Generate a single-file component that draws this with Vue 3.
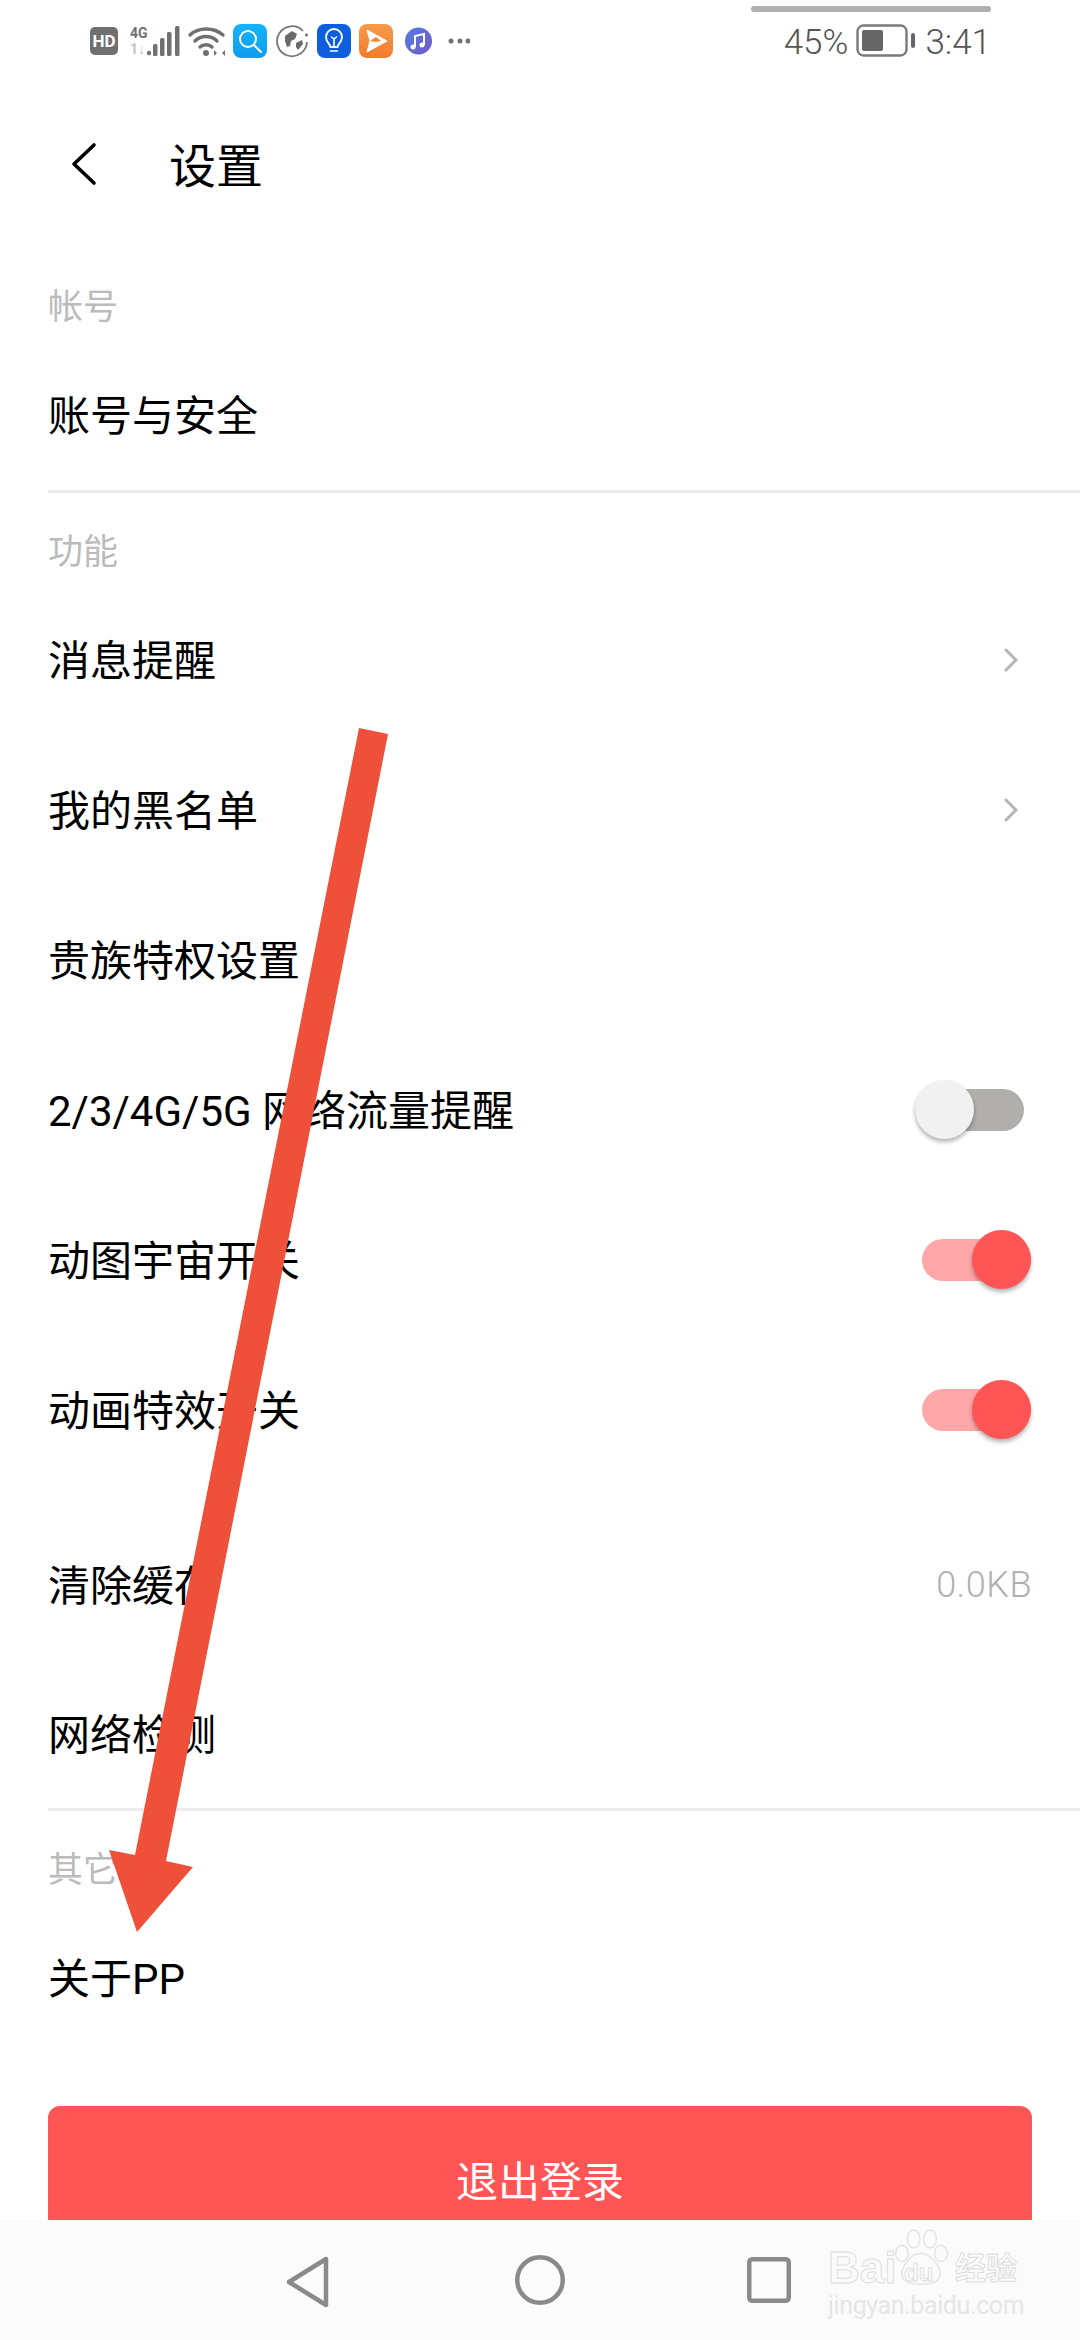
<template>
  <div class="phone">
    <!-- 状态栏 -->
    <div class="status-bar">
      <div class="top-line"></div>
      <svg class="ic" width="28" height="28" viewBox="0 0 28 28">
        <rect width="28" height="28" rx="5" fill="#707070" />
        <text x="14" y="20" text-anchor="middle" class="hd">HD</text>
      </svg>
      <svg class="ic" width="55" height="34" viewBox="0 0 55 34">
        <text x="5" y="14" class="net">4G</text>
        <text x="5" y="30" class="net light">1↓</text>
        <circle cx="24" cy="29" r="2.2" fill="#707070" />
        <rect x="28" y="20" width="4.5" height="12" rx="1.5" fill="#707070" />
        <rect x="35" y="14" width="4.5" height="18" rx="1.5" fill="#707070" />
        <rect x="42" y="8" width="4.5" height="24" rx="1.5" fill="#707070" />
        <rect x="50" y="2" width="4.5" height="30" rx="1.5" fill="#707070" />
      </svg>
      <svg class="ic" width="39" height="34" viewBox="0 0 39 34">
        <g fill="none" stroke="#707070" stroke-width="3.4" stroke-linecap="round">
          <path d="M3 11C11 3 27 3 36 11" />
          <path d="M8 17C14 11 24 11 30 17" />
          <path d="M13 23C16 20 22 20 25 23" />
        </g>
        <circle cx="19" cy="29" r="3" fill="#707070" />
        <path d="M27 26l3 3-3 3zM38 26l-3 3 3 3z" fill="#707070" />
      </svg>
      <svg class="ic" width="34" height="34" viewBox="0 0 34 34">
        <defs>
          <linearGradient id="searchBg" x1="0" y1="0" x2="0" y2="1">
            <stop offset="0" stop-color="#12b5fb" />
            <stop offset="1" stop-color="#0f9df0" />
          </linearGradient>
          <linearGradient id="playBg" x1="0" y1="0" x2="0" y2="1">
            <stop offset="0" stop-color="#f89a4a" />
            <stop offset="1" stop-color="#f27c2e" />
          </linearGradient>
          <linearGradient id="musicBg" x1="0" y1="0" x2="1" y2="1">
            <stop offset="0" stop-color="#4f7fe0" />
            <stop offset="1" stop-color="#7a55c8" />
          </linearGradient>
        </defs>
        <rect width="34" height="34" rx="8" fill="url(#searchBg)" />
        <circle cx="15" cy="15" r="8" fill="none" stroke="#fff" stroke-width="2" />
        <path d="M21 21l7 7" stroke="#fff" stroke-width="2" stroke-linecap="round" />
      </svg>
      <svg class="ic" width="35" height="34" viewBox="0 0 35 34">
        <path d="M29 7A15 15 0 1 0 33 18" fill="none" stroke="#777" stroke-width="1.800" />
        <path d="M11 12l7-5 5 3-2 5-4 2-1 5-3 1-2-6zM22 19l6-3 1 4-5 6-2-3z" fill="#6a6a6a" />
        <circle cx="32.500" cy="11" r="1.400" fill="#6a6a6a" />
      </svg>
      <svg class="ic" width="35" height="34" viewBox="0 0 35 34">
        <rect x="1" width="34" height="34" rx="8" fill="#0d5fe0" />
        <path d="M14.500 23c0-3-4.500-4.500-4.500-10a8 8 0 0 1 16 0c0 5.500-4.500 7-4.500 10z" fill="none" stroke="#fff" stroke-width="1.800" />
        <path d="M18 23v-8M15.500 13l2.500 2 2.500-2M14.500 27h7" fill="none" stroke="#fff" stroke-width="1.600" stroke-linecap="round" />
      </svg>
      <svg class="ic" width="35" height="34" viewBox="0 0 35 34">
        <rect x="1" width="34" height="34" rx="8" fill="url(#playBg)" />
        <path d="M9 6l20 11-20 11 3-11z" fill="#fff" stroke="#fff" stroke-width="1" stroke-linejoin="round" />
        <path d="M12 17l6-4 5 4-5 1z" fill="#f58537" />
      </svg>
      <svg class="ic" width="32" height="34" viewBox="0 0 32 34">
        <circle cx="18.500" cy="17" r="13.500" fill="url(#musicBg)" />
        <path d="M15 23V12l9-2v11" fill="none" stroke="#fff" stroke-width="2" />
        <circle cx="13" cy="23" r="2.500" fill="#fff" />
        <circle cx="22" cy="21" r="2.500" fill="#fff" />
      </svg>
      <svg class="ic" width="31" height="34" viewBox="0 0 31 34">
        <circle cx="12" cy="17" r="2.500" fill="#707070" />
        <circle cx="21" cy="17" r="2.500" fill="#707070" />
        <circle cx="29" cy="17" r="2.500" fill="#707070" />
      </svg>

      <div class="status-right">
        <span>45%</span>
        <svg width="60" height="34" viewBox="0 0 60 34">
          <rect x="1.500" y="1.500" width="49" height="30" rx="6" fill="none" stroke="#7a7a7a" stroke-width="2.400" />
          <rect x="6" y="6" width="21" height="21" rx="2" fill="#666" />
          <rect x="55" y="9" width="4" height="15" rx="2" fill="#666" />
        </svg>
        <span>3:41</span>
      </div>
    </div>

    <!-- 内容 -->
    <div class="content">
      <div class="header">
        <svg class="back" width="26" height="44" viewBox="0 0 26 44">
          <path d="M23 3L3 22l20 19" fill="none" stroke="#000" stroke-width="3.600" stroke-linecap="round" stroke-linejoin="round" />
        </svg>
        <div class="title">设置</div>
      </div>

      <div v-for="sec in sections" :key="sec.title" class="section">
        <div class="section-title">{{ sec.title }}</div>
        <div v-for="row in sec.rows" :key="row.label" class="row" :class="{ gap: row.gap, short: row.short }">
          <span class="label">{{ row.label }}</span>
          <svg v-if="row.type === 'arrow'" class="chev" width="18" height="26" viewBox="0 0 18 26">
            <path d="M4 3l10 10L4 23" fill="none" stroke="#b5b5b5" stroke-width="3" stroke-linecap="round" />
          </svg>
          <div v-else-if="row.type === 'switch'" class="switch" :class="{ on: row.on }">
            <div class="knob"></div>
          </div>
          <span v-else-if="row.value" class="value">{{ row.value }}</span>
        </div>
      </div>

      <button class="logout">退出登录</button>
    </div>

    <!-- 底部导航 -->
    <div class="nav">
      <svg width="48" height="54" viewBox="0 0 48 54">
        <path d="M41 4v46L4 27z" fill="none" stroke="#8a8a8a" stroke-width="4.500" stroke-linejoin="round" />
      </svg>
      <svg width="54" height="54" viewBox="0 0 54 54">
        <circle cx="27" cy="25" r="22.750" fill="none" stroke="#8a8a8a" stroke-width="4.500" />
      </svg>
      <svg width="48" height="50" viewBox="0 0 48 50">
        <rect x="2.250" y="4.250" width="39.500" height="41.500" rx="3" fill="none" stroke="#8a8a8a" stroke-width="4.500" />
      </svg>
    </div>

    <!-- 水印 -->
    <div class="watermark">
      <svg class="paw" width="58" height="64" viewBox="0 0 64 64">
        <g fill="#fbfbfb" stroke="#e2e2e2" stroke-width="1.500">
          <ellipse cx="11" cy="28" rx="7" ry="9" />
          <ellipse cx="24" cy="12" rx="7" ry="10" />
          <ellipse cx="42" cy="12" rx="7" ry="10" />
          <ellipse cx="54" cy="28" rx="7" ry="9" />
          <path d="M32 28c-10 0-21 13-21 23 0 9 9 11 21 11s21-2 21-11c0-10-11-23-21-23z" />
        </g>
      </svg>
      <span class="wm-bai">Bai</span>
      <span class="wm-du">du</span>
      <span class="wm-cn">经验</span>
      <div class="wm-url">jingyan.baidu.com</div>
    </div>

    <!-- 标注箭头 -->
    <svg class="mark" width="1080" height="2340" viewBox="0 0 1080 2340">
      <path d="M359 728L388 734L166 1861L193 1867L137 1932L109 1850L135 1855Z" fill="#ef503a" />
    </svg>
  </div>
</template>

<script setup>
const sections = [
  {
    title: '帐号',
    rows: [{ label: '账号与安全' }]
  },
  {
    title: '功能',
    rows: [
      { label: '消息提醒', type: 'arrow' },
      { label: '我的黑名单', type: 'arrow' },
      { label: '贵族特权设置' },
      { label: '2/3/4G/5G 网络流量提醒', type: 'switch', on: false },
      { label: '动图宇宙开关', type: 'switch', on: true },
      { label: '动画特效开关', type: 'switch', on: true },
      { label: '清除缓存', value: '0.0KB', gap: true },
      { label: '网络检测', short: true }
    ]
  },
  {
    title: '其它',
    rows: [{ label: '关于PP' }]
  }
]
</script>

<style>
html,
body {
  margin: 0;
  background: #fff;
}
</style>

<style scoped>
.phone {
  position: relative;
  width: 1080px;
  height: 2340px;
  overflow: hidden;
  display: flex;
  flex-direction: column;
  background: #fff;
  font-family: Roboto, "Noto Sans CJK SC", sans-serif;
  color: #000;
}

.status-bar {
  position: relative;
  flex: none;
  height: 70px;
  box-sizing: border-box;
  padding: 12px 89px 0 90px;
  display: flex;
  align-items: center;
  gap: 7px;
}

.top-line {
  position: absolute;
  left: 751px;
  top: 6px;
  width: 240px;
  height: 6px;
  border-radius: 3px;
  background: #b0b0b0;
}

.ic {
  flex: none;
}

.hd {
  font: 700 17px Roboto, sans-serif;
  fill: #fff;
}

.net {
  font: 700 14px Roboto, sans-serif;
  fill: #707070;
}

.net.light {
  fill: #c4c4c4;
}

.status-right {
  margin-left: auto;
  display: flex;
  align-items: center;
  gap: 8px;
  font-size: 35px;
  font-weight: 300;
  color: #555;
}

.status-right span {
  margin-top: 2px;
}

.status-right svg {
  margin-right: 1px;
}

.content {
  flex: 1;
  min-height: 0;
  overflow: hidden;
}

.header {
  display: flex;
  align-items: center;
  height: 96px;
  padding: 48px 0 56px 71px;
  box-sizing: content-box;
}

.back {
  margin-top: -4px;
}

.title {
  margin-left: 72px;
  font-size: 47px;
  line-height: 96px;
  padding-top: 2px;
}

.section + .section {
  border-top: 3px solid #ececec;
  margin-left: 48px;
  padding-top: 22px;
}

.section + .section .section-title,
.section + .section .row {
  margin-left: -48px;
}

.section-title {
  height: 70px;
  line-height: 75px;
  padding-left: 48px;
  font-size: 35px;
  color: #bbb;
}

.row {
  height: 150px;
  padding: 0 48px;
  display: flex;
  align-items: center;
  justify-content: space-between;
  font-size: 42px;
}

.row .label {
  margin-top: -6px;
}

.row.gap {
  margin-top: 25px;
}

.row.short {
  height: 148px;
}

.chev {
  margin-right: 12px;
}

.value {
  font-size: 36px;
  font-weight: 300;
  letter-spacing: 0.5px;
  color: #b0b0b0;
}

.switch {
  position: relative;
  width: 109px;
  height: 42px;
  border-radius: 21px;
  margin-right: 8px;
  background: #b0afab;
}

.switch.on {
  margin-right: 1px;
  background: #ffa6a8;
}

.knob {
  position: absolute;
  left: 0;
  top: -9px;
  width: 59px;
  height: 59px;
  border-radius: 50%;
  background: #f1f1f1;
  box-shadow: 0 3px 4px rgba(0, 0, 0, 0.3);
}

.switch.on .knob {
  left: 50px;
  background: #ff5555;
}

.logout {
  display: block;
  width: 984px;
  height: 150px;
  margin: 53px 48px 0;
  padding: 0 0 6px;
  border: none;
  border-radius: 12px;
  background: #ff5555;
  color: #fff;
  font-family: inherit;
  font-size: 42px;
}

.nav {
  flex: none;
  height: 120px;
  background: #fbfbfb;
  box-sizing: border-box;
  padding: 35px 0 0 285px;
  display: flex;
  align-items: flex-start;
  gap: 180px;
}

.watermark {
  position: absolute;
  left: 828px;
  top: 2225px;
  width: 200px;
  height: 96px;
  color: #fbfbfb;
  font-family: "Liberation Sans", "Noto Sans CJK SC", sans-serif;
  font-weight: 700;
  white-space: nowrap;
}

.watermark span {
  position: absolute;
  -webkit-text-stroke: 1px #dedede;
}

.paw {
  position: absolute;
  left: 64px;
  top: 0;
}

.wm-bai {
  left: 0;
  top: 23px;
  font-size: 44px;
  line-height: 40px;
}

.wm-du {
  left: 76px;
  top: 36px;
  font-size: 24px;
  line-height: 24px;
}

.wm-cn {
  left: 127px;
  top: 27px;
  font-size: 31px;
  line-height: 34px;
}

.wm-url {
  position: absolute;
  left: 0;
  top: 68px;
  font-family: Roboto, sans-serif;
  font-weight: 400;
  font-size: 25px;
  line-height: 26px;
  letter-spacing: -0.4px;
  color: #e6e6e6;
}

.mark {
  position: absolute;
  left: 0;
  top: 0;
  pointer-events: none;
}
</style>
